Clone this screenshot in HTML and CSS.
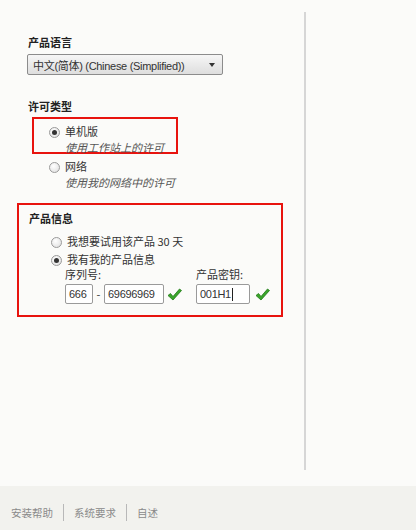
FILE: index.html
```html
<!DOCTYPE html>
<html lang="zh-CN">
<head>
    <meta charset="UTF-8">
    <title>产品信息</title>
    <link rel="stylesheet" href="styles.css">
</head>
<body>
    <div class="page">
        <div class="main">
            <div class="content">
                <div class="section-title">产品语言</div>
                <div class="select">
                    <span>中文(简体) (Chinese (Simplified))</span>
                    <span class="arrow"></span>
                </div>

                <div class="section-title license-title">许可类型</div>
                <div class="license-box">
                    <div class="option">
                        <span class="radio checked"></span>
                        <div>
                            <div class="option-label">单机版</div>
                            <div class="option-desc">使用工作站上的许可</div>
                        </div>
                    </div>
                </div>
                <div class="option network">
                    <span class="radio"></span>
                    <div>
                        <div class="option-label">网络</div>
                        <div class="option-desc">使用我的网络中的许可</div>
                    </div>
                </div>

                <div class="product-box">
                    <div class="section-title">产品信息</div>
                    <div class="option trial">
                        <span class="radio"></span>
                        <div class="option-label">我想要试用该产品 30 天</div>
                    </div>
                    <div class="option own">
                        <span class="radio checked"></span>
                        <div class="option-label">我有我的产品信息</div>
                    </div>
                    <div class="fields">
                        <div class="field">
                            <div class="field-label">序列号:</div>
                            <div class="field-row">
                                <span class="input short">666</span>
                                <span class="dash">-</span>
                                <span class="input long">69696969</span>
                                <svg class="check" width="15" height="13" viewBox="0 0 15 13"><path d="M1 7.5 L3.5 5.5 L6 8.5 L12.5 1 L14.5 2.5 L6 12 Z" fill="#3aa52a" stroke="#217a18" stroke-width="0.8" stroke-linejoin="round"/></svg>
                            </div>
                        </div>
                        <div class="field key">
                            <div class="field-label">产品密钥:</div>
                            <div class="field-row">
                                <span class="input keyinput">001H1<span class="caret"></span></span>
                                <svg class="check" width="15" height="13" viewBox="0 0 15 13"><path d="M1 7.5 L3.5 5.5 L6 8.5 L12.5 1 L14.5 2.5 L6 12 Z" fill="#3aa52a" stroke="#217a18" stroke-width="0.8" stroke-linejoin="round"/></svg>
                            </div>
                        </div>
                    </div>
                </div>
            </div>
        </div>
        <div class="footer">
            <span>安装帮助</span>
            <span class="sep"></span>
            <span>系统要求</span>
            <span class="sep"></span>
            <span>自述</span>
        </div>
    </div>
</body>
</html>
```

FILE: styles.css
```css
body {
    margin: 0;
    background: #fbfbf9;
    font-family: "Noto Sans CJK SC", "Liberation Sans", sans-serif;
    font-size: 11px;
    color: #333;
}

.page {
    display: flex;
    flex-direction: column;
    height: 530px;
}

.main {
    flex: 1;
    display: flex;
    padding-top: 12px;
    padding-bottom: 16px;
}

.content {
    width: 306px;
    box-sizing: border-box;
    border-right: 2px solid #d6d6d6;
    padding-top: 23px;
    padding-left: 27px;
}

.section-title {
    font-weight: bold;
    color: #222;
    line-height: 14px;
    padding-left: 1px;
}

.select {
    margin-top: 5px;
    width: 196px;
    height: 21px;
    box-sizing: border-box;
    border: 1px solid #8c8c8c;
    border-radius: 2px;
    background: linear-gradient(#f6f6f6, #dedede);
    display: flex;
    align-items: center;
    justify-content: space-between;
    padding: 0 7px 0 5px;
    font-family: "Liberation Sans", "Noto Sans CJK SC", sans-serif;
    font-size: 11px;
    letter-spacing: -0.3px;
    color: #333;
}

.arrow {
    width: 0;
    height: 0;
    border-left: 3px solid transparent;
    border-right: 3px solid transparent;
    border-top: 4px solid #333;
}

.license-title {
    margin-top: 24px;
}

.license-box {
    margin-top: 4px;
    margin-left: 5px;
    width: 146px;
    height: 37px;
    box-sizing: border-box;
    border: 2px solid #e8130e;
    padding: 5px 0 0 15px;
}

.option {
    display: flex;
    align-items: flex-start;
    gap: 5px;
}

.option-label {
    line-height: 15px;
    color: #333;
}

.option-desc {
    font-style: italic;
    color: #555;
    line-height: 16px;
}

.radio {
    width: 9px;
    height: 9px;
    margin-top: 3px;
    border: 1px solid #9a9a9a;
    border-radius: 50%;
    background: radial-gradient(circle at 40% 35%, #ffffff, #dcdcdc);
    position: relative;
    flex-shrink: 0;
}

.radio.checked::after {
    content: "";
    position: absolute;
    left: 2px;
    top: 2px;
    width: 5px;
    height: 5px;
    border-radius: 50%;
    background: #333;
}

.network {
    margin-top: 5px;
    margin-left: 22px;
}

.product-box {
    margin-top: 13px;
    margin-left: -10px;
    width: 266px;
    height: 114px;
    box-sizing: border-box;
    border: 2px solid #e8130e;
    padding: 6px 0 0 9px;
}

.trial {
    margin-top: 9px;
    margin-left: 23px;
}

.own {
    margin-top: 3px;
    margin-left: 23px;
}

.fields {
    display: flex;
    gap: 14px;
    margin-left: 37px;
}

.field-label {
    line-height: 14px;
    color: #333;
}

.field-row {
    display: flex;
    align-items: center;
    margin-top: 3px;
}

.input {
    height: 20px;
    box-sizing: border-box;
    border: 1px solid #9a9a9a;
    border-radius: 2px;
    background: #fff;
    padding-left: 3px;
    font-family: "Liberation Sans", sans-serif;
    font-size: 11px;
    letter-spacing: -0.3px;
    line-height: 18px;
    color: #333;
}

.short {
    width: 28px;
}

.long {
    width: 60px;
}

.keyinput {
    width: 54px;
    display: flex;
    align-items: center;
}

.caret {
    width: 1px;
    height: 13px;
    background: #222;
    margin-left: 1px;
}

.dash {
    width: 11px;
    text-align: center;
    color: #333;
}

.check {
    margin-left: 3px;
}

.key .check {
    margin-left: 5px;
}

.footer {
    height: 44px;
    background: #f2f2ee;
    display: flex;
    align-items: center;
    padding: 8px 0 0 11px;
    box-sizing: border-box;
    color: #8a8a8a;
    font-size: 10.5px;
}

.sep {
    width: 1px;
    height: 17px;
    background: #b8b8b8;
    margin: 0 10px;
}
```
